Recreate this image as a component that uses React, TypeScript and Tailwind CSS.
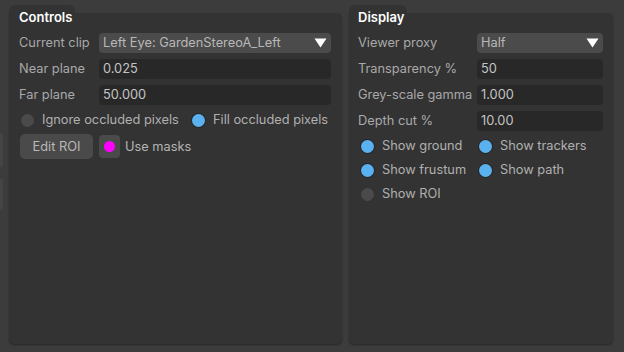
import React from 'react';

const font = { fontFamily: 'Inter, "Liberation Sans", sans-serif' };

const Caret = () => (
  <svg width="13" height="10" viewBox="0 0 13 10" className="shrink-0">
    <path d="M0.5 0.5 H12.5 L6.5 9.5 Z" fill="#ffffff" />
  </svg>
);

const Radio = ({ on }: { on: boolean }) => (
  <span
    className={`w-[13px] h-[13px] rounded-full shrink-0 ${
      on ? 'bg-[#5bb1f0] ring-1 ring-[#262626]' : 'bg-[#4a4a4a]'
    }`}
  />
);

const Field = ({ label, value, labelW }: { label: string; value: string; labelW: string }) => (
  <div className="flex items-center h-[20px]">
    <span className={`${labelW} shrink-0 text-[#a9a9a9]`}>{label}</span>
    <div className="flex-1 h-[20px] rounded-[4px] bg-[#282828] px-[4px] flex items-center text-[#c4c4c4]">{value}</div>
  </div>
);

const Select = ({ label, value, labelW }: { label: string; value: string; labelW: string }) => (
  <div className="flex items-center h-[20px]">
    <span className={`${labelW} shrink-0 text-[#a9a9a9]`}>{label}</span>
    <div className="flex-1 h-[20px] rounded-[4px] bg-[#4b4b4b] pl-[4px] pr-[4px] flex items-center justify-between text-[#b8b8b8]">
      <span>{value}</span>
      <Caret />
    </div>
  </div>
);

const Option = ({ on, label, w }: { on: boolean; label: string; w?: string }) => (
  <div className={`flex items-center gap-[8px] h-[14px] ${w ?? ''}`}>
    <Radio on={on} />
    <span className="text-[#b0b0b0]">{label}</span>
  </div>
);

const Panel = ({ title, tabW, titlePl, className, children }: { title: string; tabW: string; titlePl: string; className: string; children: React.ReactNode }) => (
  <div className={`flex flex-col ${className}`}>
    <div className={`${tabW} h-[8px] bg-[#333333] rounded-t-[6px]`} />
    <div className="flex-1 bg-[#333333] rounded-[5px] rounded-tl-none shadow-[0_1px_2px_rgba(0,0,0,0.35)] flex flex-col">
      <div className={`-mt-[4px] leading-[16px] text-[13px] font-semibold text-white ${titlePl}`}>{title}</div>
      {children}
    </div>
  </div>
);

export default function App() {
  return (
    <div className="w-[624px] h-[352px] bg-[#3c3c3c] flex text-[12.8px] leading-[16px] overflow-hidden" style={font}>
      <div className="w-[9px] shrink-0 flex flex-col pt-[133px] gap-[11px]">
        <div className="w-[3px] h-[34px] bg-[#444444] rounded-r-[3px]" />
        <div className="w-[3px] h-[32px] bg-[#444444] rounded-r-[3px]" />
      </div>

      <Panel title="Controls" tabW="w-[66px]" titlePl="pl-[10px]" className="w-[333px] pt-[5px] pb-[8px]">
        <div className="pl-[10px] pr-[11px] flex flex-col gap-[6px] mt-[8px]">
          <Select label="Current clip" value="Left Eye: GardenStereoA_Left" labelW="w-[80px]" />
          <Field label="Near plane" value="0.025" labelW="w-[80px]" />
          <Field label="Far plane" value="50.000" labelW="w-[80px]" />
        </div>
        <div className="flex items-center pl-[12px] mt-[8px]">
          <Option on={false} label="Ignore occluded pixels" w="w-[171px]" />
          <Option on={true} label="Fill occluded pixels" />
        </div>
        <div className="flex items-center pl-[11px] mt-[7px] gap-[6px]">
          <button className="w-[73px] h-[25px] rounded-[5px] bg-[#4a4a4a] text-[#b8b8b8]">Edit ROI</button>
          <div className="w-[21px] h-[23px] rounded-[4px] bg-[#4a4a4a] flex items-center justify-center">
            <span className="w-[11px] h-[11px] rounded-full bg-[#ff00ff]" />
          </div>
          <span className="text-[#b4b4b4] -ml-[1px]">Use masks</span>
        </div>
      </Panel>

      <div className="w-[7px] shrink-0" />

      <Panel title="Display" tabW="w-[58px]" titlePl="pl-[9px]" className="w-[264px] pt-[5px] pb-[8px]">
        <div className="pl-[9px] pr-[10px] flex flex-col gap-[6px] mt-[8px]">
          <Select label="Viewer proxy" value="Half" labelW="w-[119px]" />
          <Field label="Transparency %" value="50" labelW="w-[119px]" />
          <Field label="Grey-scale gamma" value="1.000" labelW="w-[119px]" />
          <Field label="Depth cut %" value="10.00" labelW="w-[119px]" />
        </div>
        <div className="pl-[12px] mt-[8px] flex flex-col gap-[10px]">
          <div className="flex items-center">
            <Option on={true} label="Show ground" w="w-[118px]" />
            <Option on={true} label="Show trackers" />
          </div>
          <div className="flex items-center">
            <Option on={true} label="Show frustum" w="w-[118px]" />
            <Option on={true} label="Show path" />
          </div>
          <div className="flex items-center">
            <Option on={false} label="Show ROI" />
          </div>
        </div>
      </Panel>
    </div>
  );
}
